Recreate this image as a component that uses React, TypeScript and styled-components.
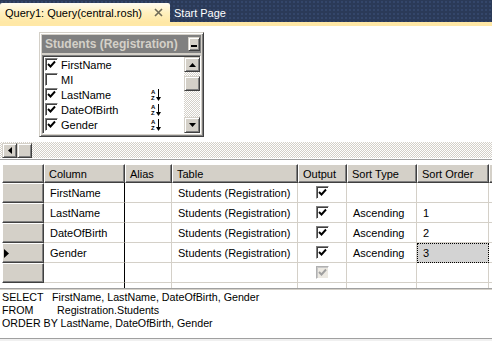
import React from "react";
import styled, { createGlobalStyle } from "styled-components";

const FACE = "#d4d0c8";
const SHADOW = "#808080";
const DARK = "#404040";
const GRID_LINE = "#d4d0c8";
const HATCH = `repeating-conic-gradient(${FACE} 0 25%, #ffffff 0 50%) 0 0 / 2px 2px`;

const GlobalStyle = createGlobalStyle`
  html, body {
    margin: 0;
    padding: 0;
    background: #ffffff;
  }
  body {
    font-family: "Liberation Sans", Arial, sans-serif;
    font-size: 11px;
    color: #000000;
  }
`;

type Field = { name: string; checked: boolean; sorted: boolean };

const fields: Field[] = [
  { name: "FirstName", checked: true, sorted: false },
  { name: "MI", checked: false, sorted: false },
  { name: "LastName", checked: true, sorted: true },
  { name: "DateOfBirth", checked: true, sorted: true },
  { name: "Gender", checked: true, sorted: true },
  { name: "", checked: false, sorted: false },
];

type Row = { column: string; table: string; sortType: string; sortOrder: string };

const rows: Row[] = [
  { column: "FirstName", table: "Students (Registration)", sortType: "", sortOrder: "" },
  { column: "LastName", table: "Students (Registration)", sortType: "Ascending", sortOrder: "1" },
  { column: "DateOfBirth", table: "Students (Registration)", sortType: "Ascending", sortOrder: "2" },
  { column: "Gender", table: "Students (Registration)", sortType: "Ascending", sortOrder: "3" },
];

const headers = ["Column", "Alias", "Table", "Output", "Sort Type", "Sort Order", ""];

function CheckMark({ color = "#000" }: { color?: string }) {
  return (
    <svg width="11" height="11" viewBox="0 0 11 11">
      <polyline points="2,5 4.5,7.5 9,2.5" fill="none" stroke={color} strokeWidth="1.9" />
    </svg>
  );
}

function Arrow({ dir }: { dir: "up" | "down" | "left" }) {
  if (dir === "left")
    return (
      <svg width="4" height="7" viewBox="0 0 4 7">
        <path d="M4 0 L0 3.5 L4 7Z" fill="#000" />
      </svg>
    );
  return (
    <svg width="7" height="4" viewBox="0 0 7 4">
      <path d={dir === "up" ? "M0 4 L3.5 0 L7 4Z" : "M0 0 L3.5 4 L7 0Z"} fill="#000" />
    </svg>
  );
}

function SortIcon() {
  return (
    <SortGlyph>
      <SortLetters>
        <span>A</span>
        <span>Z</span>
      </SortLetters>
      <svg width="5" height="12" viewBox="0 0 5 12">
        <line x1="2.5" y1="0" x2="2.5" y2="9" stroke="#000" strokeWidth="1" />
        <path d="M0 8 L2.5 12 L5 8Z" fill="#000" />
      </svg>
    </SortGlyph>
  );
}

export default function App() {
  return (
    <Window>
      <GlobalStyle />
      <TabStrip>
        <ActiveTab>
          <span>Query1: Query(central.rosh)</span>
          <CloseGlyph width="9" height="9" viewBox="0 0 9 9">
            <path d="M1 1 L8 8 M8 1 L1 8" stroke="#6f6a57" strokeWidth="1.6" />
          </CloseGlyph>
        </ActiveTab>
        <InactiveTab>Start Page</InactiveTab>
      </TabStrip>
      <TabAccent />

      <DiagramPane>
        <TableBox>
          <TitleBar>
            <span>Students (Registration)</span>
            <MinButton>
              <MinBar />
            </MinButton>
          </TitleBar>
          <FieldList>
            <Items>
              {fields.map((f, i) => (
                <ItemRow key={i}>
                  <Box>{f.checked && <CheckMark />}</Box>
                  <ItemName>{f.name}</ItemName>
                  {f.sorted && <SortIcon />}
                </ItemRow>
              ))}
            </Items>
            <VScroll>
              <ScrollButton $h={15}>
                <Arrow dir="up" />
              </ScrollButton>
              <Track>
                <Thumb />
              </Track>
              <ScrollButton $h={16}>
                <Arrow dir="down" />
              </ScrollButton>
            </VScroll>
          </FieldList>
        </TableBox>
      </DiagramPane>

      <HScroll>
        <ScrollButton $h={15} $w={15}>
          <Arrow dir="left" />
        </ScrollButton>
        <ScrollButton $h={15} $w={15} />
      </HScroll>
      <Splitter />

      <GridPane>
        <Grid>
          <RowHeader />
          {headers.map((h, i) => (
            <HeaderCell key={i}>{h}</HeaderCell>
          ))}
          {rows.map((r, i) => (
            <React.Fragment key={i}>
              <RowHeader>
                {i === 3 && (
                  <svg width="5" height="9" viewBox="0 0 5 9">
                    <path d="M0 0 L5 4.5 L0 9Z" fill="#000" />
                  </svg>
                )}
              </RowHeader>
              <Cell $divider>{r.column}</Cell>
              <Cell />
              <Cell>{r.table}</Cell>
              <Cell $center>
                <Box>
                  <CheckMark />
                </Box>
              </Cell>
              <Cell>{r.sortType}</Cell>
              <Cell $focus={i === 3}>{r.sortOrder}</Cell>
              <Cell />
            </React.Fragment>
          ))}
          <RowHeader />
          <Cell $divider />
          <Cell />
          <Cell />
          <Cell $center>
            <Box $disabled>
              <CheckMark color="#a0a0a0" />
            </Box>
          </Cell>
          <Cell />
          <Cell />
          <Cell />
          <Blank />
          <Cell $divider />
          <Cell />
          <Cell />
          <Cell />
          <Cell />
          <Cell />
          <Cell />
        </Grid>
      </GridPane>

      <SqlPane>
        <SqlLine>
          <Keyword $width={50}>SELECT</Keyword>FirstName, LastName, DateOfBirth, Gender
        </SqlLine>
        <SqlLine>
          <Keyword $width={55}>FROM</Keyword>Registration.Students
        </SqlLine>
        <SqlLine>ORDER BY LastName, DateOfBirth, Gender</SqlLine>
      </SqlPane>
      <BottomEdge />
    </Window>
  );
}

const Window = styled.div`
  width: 492px;
  height: 341px;
  display: flex;
  flex-direction: column;
  overflow: hidden;
  background: #ffffff;
`;

const TabStrip = styled.div`
  height: 22px;
  flex-shrink: 0;
  display: flex;
  align-items: flex-end;
  background-color: #2b3a58;
  background-image: radial-gradient(circle, #34466a 0.8px, transparent 1.2px);
  background-size: 4px 4px;
  font-size: 11px;
`;

const ActiveTab = styled.div`
  width: 170px;
  height: 19px;
  box-sizing: border-box;
  padding: 0 7px 0 5px;
  display: flex;
  align-items: center;
  white-space: nowrap;
  background: linear-gradient(#fffcf2, #fff0bf 50%, #ffe8a6);
  border-radius: 2px 2px 0 0;
`;

const CloseGlyph = styled.svg`
  margin-left: auto;
  flex-shrink: 0;
`;

const InactiveTab = styled.div`
  height: 19px;
  padding-left: 4px;
  display: flex;
  align-items: center;
  color: #ffffff;
`;

const TabAccent = styled.div`
  height: 4px;
  flex-shrink: 0;
  background: #ffe8a6;
`;

const DiagramPane = styled.div`
  height: 116px;
  flex-shrink: 0;
  box-sizing: border-box;
  padding: 6px 0 0 39px;
`;

const TableBox = styled.div`
  width: 165px;
  height: 105px;
  box-sizing: border-box;
  display: flex;
  flex-direction: column;
  padding: 2px;
  background: ${FACE};
  border: 1px solid;
  border-color: ${FACE} ${DARK} ${DARK} ${FACE};
  box-shadow: inset 1px 1px #ffffff, inset -1px -1px ${SHADOW};
`;

const TitleBar = styled.div`
  height: 18px;
  flex-shrink: 0;
  display: flex;
  align-items: center;
  padding-left: 3px;
  background: ${SHADOW};
  color: ${FACE};
  font-weight: bold;
  font-size: 12px;
  white-space: nowrap;
`;

const raised = `
  background: ${FACE};
  border: 1px solid;
  border-color: ${FACE} ${DARK} ${DARK} ${FACE};
  box-shadow: inset 1px 1px #ffffff, inset -1px -1px ${SHADOW};
  box-sizing: border-box;
`;

const MinButton = styled.div`
  ${raised}
  width: 12px;
  height: 14px;
  margin-left: auto;
  margin-right: 1px;
  display: flex;
  align-items: flex-end;
  justify-content: center;
`;

const MinBar = styled.div`
  width: 6px;
  height: 2px;
  margin-bottom: 3px;
  background: #000000;
`;

const FieldList = styled.div`
  margin-top: 2px;
  height: 79px;
  box-sizing: border-box;
  display: flex;
  overflow: hidden;
  padding: 1px 0 0 1px;
  background: #ffffff;
  border: 1px solid;
  border-color: ${SHADOW} #ffffff #ffffff ${SHADOW};
  box-shadow: inset 1px 1px ${DARK};
`;

const Items = styled.div`
  flex: 1;
  display: flex;
  flex-direction: column;
  overflow: hidden;
`;

const ItemRow = styled.div`
  height: 15px;
  flex-shrink: 0;
  display: flex;
  align-items: center;
  padding-left: 1px;
`;

const Box = styled.div<{ $disabled?: boolean }>`
  width: 13px;
  height: 13px;
  flex-shrink: 0;
  box-sizing: border-box;
  display: flex;
  align-items: center;
  justify-content: center;
  background: ${(p) => (p.$disabled ? "#ece9e2" : "#ffffff")};
  border: 1px solid;
  border-color: ${(p) =>
    p.$disabled ? `#b0b0b0 #ffffff #ffffff #b0b0b0` : `${SHADOW} #ffffff #ffffff ${SHADOW}`};
  box-shadow: inset 1px 1px ${(p) => (p.$disabled ? "#c8c8c8" : DARK)};
`;

const ItemName = styled.span`
  width: 90px;
  margin-left: 3px;
  white-space: nowrap;
`;

const SortGlyph = styled.span`
  display: inline-flex;
  align-items: center;
  gap: 1px;
`;

const SortLetters = styled.span`
  display: flex;
  flex-direction: column;
  font-size: 6px;
  font-weight: bold;
  line-height: 6px;
`;

const VScroll = styled.div`
  width: 16px;
  flex-shrink: 0;
  display: flex;
  flex-direction: column;
`;

const ScrollButton = styled.div<{ $h: number; $w?: number }>`
  ${raised}
  height: ${(p) => p.$h}px;
  width: ${(p) => (p.$w ? `${p.$w}px` : "auto")};
  flex-shrink: 0;
  display: flex;
  align-items: center;
  justify-content: center;
`;

const Track = styled.div`
  flex: 1;
  background: ${HATCH};
  padding-top: 4px;
`;

const Thumb = styled.div`
  ${raised}
  height: 15px;
`;

const HScroll = styled.div`
  height: 16px;
  flex-shrink: 0;
  display: flex;
  align-items: flex-end;
  padding-left: 2px;
  background: ${HATCH};
`;

const Splitter = styled.div`
  height: 1px;
  flex-shrink: 0;
  margin: 1px 0 4px;
  background: #a0a0a0;
`;

const GridPane = styled.div`
  height: 124px;
  flex-shrink: 0;
  box-sizing: border-box;
  padding-left: 2px;
  overflow: hidden;
`;

const Grid = styled.div`
  display: grid;
  grid-template-columns: 42px 81px 47px 126px 49px 70px 72px 40px;
  grid-template-rows: 19px repeat(6, 20px);
  width: 527px;
`;

const HeaderCell = styled.div`
  ${raised}
  border-color: #ffffff ${DARK} ${DARK} #ffffff;
  box-shadow: inset -1px -1px ${SHADOW};
  padding-left: 4px;
  display: flex;
  align-items: center;
  white-space: nowrap;
  overflow: hidden;
`;

const RowHeader = styled.div`
  ${raised}
  border-color: #ffffff ${DARK} ${DARK} #ffffff;
  box-shadow: inset -1px -1px ${SHADOW};
  padding-left: 1px;
  display: flex;
  align-items: center;
`;

const Blank = styled.div`
  background: #ffffff;
`;

const Cell = styled.div<{ $divider?: boolean; $center?: boolean; $focus?: boolean }>`
  box-sizing: border-box;
  display: flex;
  align-items: center;
  justify-content: ${(p) => (p.$center ? "center" : "flex-start")};
  padding-left: ${(p) => (p.$center ? "0" : "6px")};
  white-space: nowrap;
  overflow: hidden;
  background: ${(p) => (p.$focus ? "#d3d3d3" : "#ffffff")};
  border-right: 1px solid ${(p) => (p.$divider ? "#000000" : GRID_LINE)};
  border-bottom: 1px solid ${GRID_LINE};
  outline: ${(p) => (p.$focus ? "1px dotted #000000" : "none")};
  outline-offset: -1px;
`;

const SqlPane = styled.div`
  height: 50px;
  flex-shrink: 0;
  box-sizing: border-box;
  padding: 2px 0 0 2px;
  border-top: 1px solid #a0a0a0;
  box-shadow: inset 0 1px ${FACE};
  line-height: 13px;
  font-size: 10.7px;
`;

const SqlLine = styled.div`
  white-space: nowrap;
`;

const Keyword = styled.span<{ $width: number }>`
  display: inline-block;
  width: ${(p) => p.$width}px;
`;

const BottomEdge = styled.div`
  height: 3px;
  flex-shrink: 0;
  box-sizing: border-box;
  border-top: 1px solid #a0a0a0;
  background: #f0f0f0;
`;
